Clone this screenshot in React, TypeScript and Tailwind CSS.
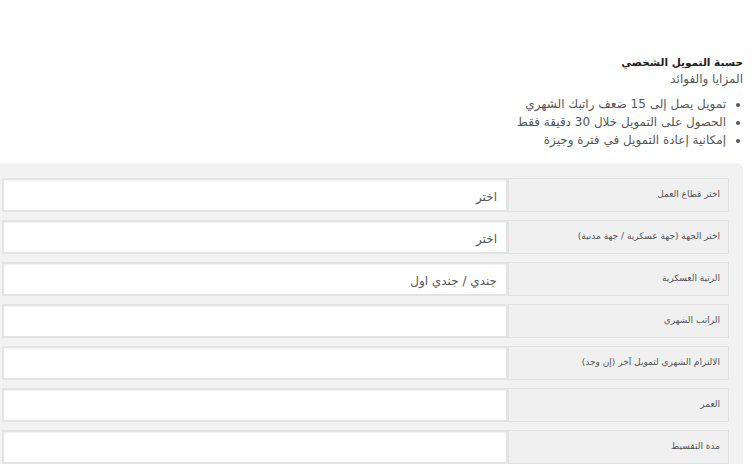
import React from "react";

const rows: { label: string; value: string }[] = [
  { label: "اختر قطاع العمل", value: "اختر" },
  { label: "اختر الجهة (جهة عسكرية / جهة مدنية)", value: "اختر" },
  { label: "الرتبة العسكرية", value: "جندي / جندي اول" },
  { label: "الراتب الشهري", value: "" },
  { label: "الالتزام الشهري لتمويل آخر (إن وجد)", value: "" },
  { label: "العمر", value: "" },
  { label: "مدة التقسيط", value: "" },
];

export default function App() {
  return (
    <div
      dir="rtl"
      className="w-[752px] h-[464px] overflow-hidden bg-white text-[#333]"
      style={{ fontFamily: '"DejaVu Sans", "Noto Sans", sans-serif' }}
    >
      <div className="pt-[54px] pr-[9px]">
        <div className="text-[10.5px] font-bold leading-[16px] text-[#222]">حسبة التمويل الشخصي</div>
        <div className="text-[12px] leading-[18px] text-[#555]">المزايا والفوائد</div>
        <ul className="list-disc pr-[17px] mt-[7px] text-[12px] leading-[18px] text-[#555]">
          <li>تمويل يصل إلى 15 ضعف راتبك الشهري</li>
          <li>الحصول على التمويل خلال 30 دقيقة فقط</li>
          <li>إمكانية إعادة التمويل في فترة وجيزة</li>
        </ul>
      </div>
      <div className="mt-[14px] mr-[9px] w-[743px] bg-[#f2f2f2] rounded-tr-[6px] pt-[15px] pr-[14px] pl-[2px] flex flex-col gap-[8px]">
        {rows.map((r, i) => (
          <div key={i} className="flex h-[34px]">
            <div className="w-[221px] shrink-0 border border-[#e2e2e2] bg-[#f0f0f0] pr-[8px] pt-[9px] text-[9px] leading-[12px] text-[#555]">
              {r.label}
            </div>
            <div className="flex-1 bg-white border-2 border-[#e4e4e4] shadow-[inset_0_1px_2px_rgba(0,0,0,0.06)] pr-[9px] flex items-center pt-[4px] text-[12px] text-[#555]">
              {r.value}
            </div>
          </div>
        ))}
      </div>
    </div>
  );
}
